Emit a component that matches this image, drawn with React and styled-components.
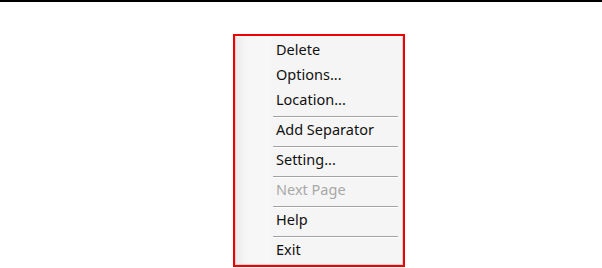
import React from 'react';
import styled, { createGlobalStyle } from 'styled-components';

const GlobalStyle = createGlobalStyle`
  html, body {
    margin: 0;
    padding: 0;
    background: #ffffff;
  }
  body {
    font-family: "Noto Sans", "Open Sans", sans-serif;
  }
`;

const Page = styled.div`
  width: 602px;
  height: 268px;
  overflow: hidden;
  background: #ffffff;
`;

const TopRule = styled.div`
  height: 2px;
  background: #000000;
`;

const Highlight = styled.div`
  width: 168px;
  margin: 32px 0 0 233px;
  border: 2px solid #f00000;
`;

const MenuPanel = styled.ul`
  list-style: none;
  margin: 0;
  padding: 0 0 2px;
  border: 1px solid #d4d4d4;
  border-top-color: #fafafa;
  background:
    linear-gradient(to right, #ebebeb 0px, #f6f6f6 10px, #f8f8f8 34px, #f5f5f5 36px, #f5f5f5 100%);
`;

const Item = styled.li`
  height: 25px;
  line-height: 24px;
  padding-left: 40px;
  font-size: 14.5px;
  color: ${({ disabled }) => (disabled ? '#a8a8a8' : '#111111')};
  white-space: nowrap;
`;

const Separator = styled.li`
  height: 1px;
  margin: 4px 4px 0 37px;
  background: #a3a3a3;
  box-shadow: 0 1px 0 #ffffff;
`;

const menu = [
  { label: 'Delete' },
  { label: 'Options...' },
  { label: 'Location...' },
  { sep: true },
  { label: 'Add Separator' },
  { sep: true },
  { label: 'Setting...' },
  { sep: true },
  { label: 'Next Page', disabled: true },
  { sep: true },
  { label: 'Help' },
  { sep: true },
  { label: 'Exit' },
];

const App = () => (
  <Page>
    <GlobalStyle />
    <TopRule />
    <Highlight>
      <MenuPanel>
        {menu.map((entry, i) =>
          entry.sep ? (
            <Separator key={i} />
          ) : (
            <Item key={entry.label} disabled={entry.disabled}>
              {entry.label}
            </Item>
          ),
        )}
      </MenuPanel>
    </Highlight>
  </Page>
);

export default App;
